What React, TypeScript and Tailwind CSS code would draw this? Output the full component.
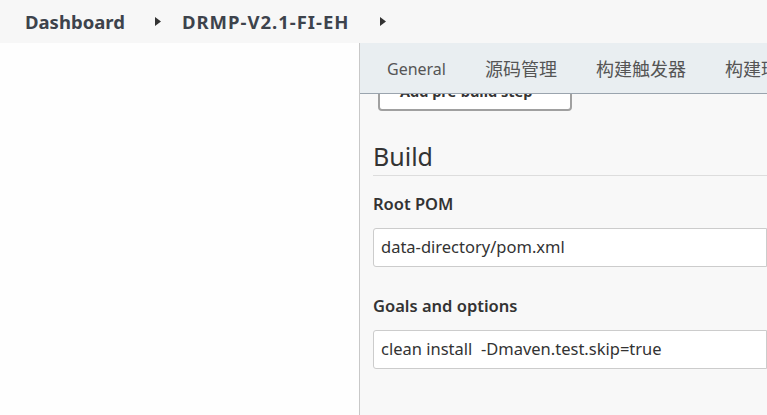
import React from 'react';

const font = { fontFamily: '"Noto Sans", "Noto Sans CJK SC", sans-serif' };

const Caret: React.FC = () => (
  <svg width="6" height="9" viewBox="0 0 6 9" className="shrink-0">
    <path d="M0 0 L6 4.5 L0 9 Z" fill="#333" />
  </svg>
);

const tabs = [
  { label: 'General', cls: 'text-[16px]' },
  { label: '源码管理', cls: 'text-[18px]' },
  { label: '构建触发器', cls: 'text-[18px]' },
  { label: '构建环境', cls: 'text-[18px]' },
  { label: '构建', cls: 'text-[18px]' },
];

const App: React.FC = () => {
  return (
    <div
      className="w-[767px] h-[415px] overflow-hidden flex flex-col bg-white"
      style={font}
    >
      {/* Breadcrumb bar */}
      <div className="h-[43px] shrink-0 bg-[#f7f7f7] flex items-center pl-[25px] text-[#3d434c] font-bold text-[18.5px]">
        <span>Dashboard</span>
        <span className="ml-[30px] mr-[21px] flex items-center">
          <Caret />
        </span>
        <span className="tracking-[1px]">DRMP-V2.1-FI-EH</span>
        <span className="ml-[30px] flex items-center">
          <Caret />
        </span>
      </div>

      <div className="flex flex-1 min-h-0">
        {/* Side panel */}
        <div className="w-[360px] shrink-0 bg-[#fefefe] border-r border-[#c8c8c8]" />

        {/* Config panel */}
        <div className="flex-1 min-w-0 flex flex-col bg-[#f8f8f8]">
          <div className="relative z-10 h-[51px] shrink-0 bg-[#e9eef1] border-b border-[#9aa4ae] flex items-center pt-[2px] pl-[27px] gap-[39px] whitespace-nowrap overflow-hidden text-[#555]">
            {tabs.map((tab) => (
              <span key={tab.label} className={tab.cls}>
                {tab.label}
              </span>
            ))}
          </div>

          <div className="flex-1 min-h-0 overflow-hidden pl-[13px]">
            <button className="block -mt-[19px] ml-[5px] w-[194px] h-[36px] pb-[3px] bg-white border-2 border-[#a0a0a0] rounded-[4px] text-left pl-[20px] text-[14.5px] font-bold text-[#333]">
              Add pre-build step
            </button>

            <h2 className="mt-[29px] text-[25px] leading-[32px] text-[#333] pb-[3px] border-b border-[#dddddd]">
              Build
            </h2>

            <div className="mt-[16px] text-[16.5px] font-semibold text-[#333]">Root POM</div>
            <div className="mt-[11px] h-[39px] bg-white border border-[#cccccc] rounded-l-[3px] flex items-center pl-[7px] text-[16.5px] text-[#333] whitespace-nowrap">
              data-directory/pom.xml
            </div>

            <div className="mt-[27px] text-[16.5px] font-semibold text-[#333]">Goals and options</div>
            <div className="mt-[11px] h-[39px] bg-white border border-[#cccccc] rounded-l-[3px] flex items-center pl-[7px] text-[16.5px] text-[#333] whitespace-pre">
              clean install  -Dmaven.test.skip=true
            </div>
          </div>
        </div>
      </div>
    </div>
  );
};

export default App;
